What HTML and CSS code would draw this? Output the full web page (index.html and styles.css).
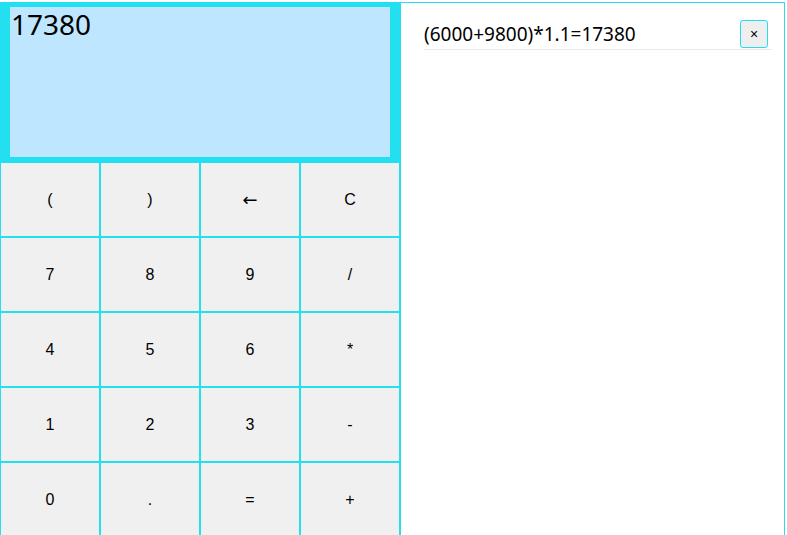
FILE: index.html
```html
<!DOCTYPE html>
<html>
<head>
<meta charset="utf-8">
<link rel="stylesheet" href="styles.css">
</head>
<body>
<div class="app">
  <div class="calc">
    <div class="screen-wrap">
      <div class="screen">17380</div>
    </div>
    <div class="keys">
      <button class="key">(</button>
      <button class="key">)</button>
      <button class="key key-arrow">←</button>
      <button class="key">C</button>
      <button class="key">7</button>
      <button class="key">8</button>
      <button class="key">9</button>
      <button class="key">/</button>
      <button class="key">4</button>
      <button class="key">5</button>
      <button class="key">6</button>
      <button class="key">*</button>
      <button class="key">1</button>
      <button class="key">2</button>
      <button class="key">3</button>
      <button class="key">-</button>
      <button class="key">0</button>
      <button class="key">.</button>
      <button class="key">=</button>
      <button class="key">+</button>
    </div>
  </div>
  <div class="history">
    <div class="item">
      <span class="expr">(6000+9800)*1.1=17380</span>
      <button class="del">×</button>
    </div>
  </div>
</div>
</body>
</html>
```

FILE: styles.css
```css
html, body {
  margin: 0;
  padding: 0;
  background: #ffffff;
}
.app {
  display: flex;
  align-items: flex-start;
  padding-top: 2px;
}
.calc {
  width: 400px;
  flex: 0 0 400px;
}
.screen-wrap {
  background: #22e0f0;
  padding: 5px 10px;
}
.screen {
  height: 150px;
  background: #bee7ff;
  font-family: "Noto Sans", "Open Sans", sans-serif;
  font-size: 28px;
  line-height: 34px;
  padding-left: 1px;
  color: #000;
  box-sizing: border-box;
}
.keys {
  display: grid;
  grid-template-columns: repeat(4, 100px);
  grid-auto-rows: 75px;
}
.key {
  margin: 0;
  border: 1px solid #22e0f0;
  background: #f0f0f0;
  font-family: "Liberation Sans", Arial, sans-serif;
  font-size: 16px;
  color: #000;
  padding: 0;
}
.key-arrow {
  font-family: "DejaVu Sans", sans-serif;
  font-size: 18px;
}
.history {
  flex: 0 0 385px;
  width: 385px;
  box-sizing: border-box;
  border: 1px solid #22e0f0;
  height: 560px;
}
.item {
  display: flex;
  align-items: center;
  justify-content: space-between;
  margin: 15px 12px 0 23px;
  height: 31px;
  padding-right: 4px;
  border-bottom: 1px solid #e8e8f4;
}
.expr {
  font-family: "Noto Sans", "Open Sans", sans-serif;
  font-size: 19px;
  color: #000;
  padding-top: 1px;
}
.del {
  width: 28px;
  height: 28px;
  margin: 0;
  padding: 0;
  border: 1px solid #22e0f0;
  border-radius: 3px;
  background: #efefef;
  font-family: "Liberation Sans", Arial, sans-serif;
  font-size: 14px;
  color: #000;
}
```
